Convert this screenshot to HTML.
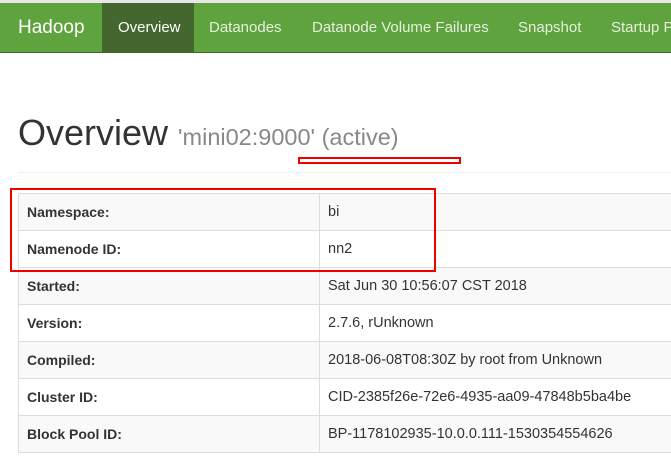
<!DOCTYPE html>
<html><head><meta charset="utf-8"><style>
*{margin:0;padding:0;box-sizing:border-box}
body{width:671px;height:468px;overflow:hidden;background:#fff;font-family:"Liberation Sans",sans-serif;position:relative;color:#333}
.top{position:absolute;left:0;top:0;width:671px;height:3px;background:#e7e7e7}
.nav{position:absolute;left:0;top:3px;width:671px;height:50px;background:#5fa33e;border-bottom:1px solid #3d6b27;overflow:hidden}
.nav span{position:absolute;top:0;line-height:50px;color:#e6f0dd;font-size:15px;white-space:nowrap}
.nav .brand{font-size:19px;color:#fff;left:18px}
.nav .act{left:102px;width:92px;background:#43672f;color:#fff;padding-left:16px}
h1{position:absolute;left:18px;top:112px;font-size:36px;font-weight:normal;color:#333;white-space:nowrap}
h1 small{font-size:23.5px;color:#888}
.hr{position:absolute;left:18px;top:172px;width:653px;height:1px;background:#eee}
.wrap{position:absolute;left:18px;top:193px;width:653px;height:270px;overflow:hidden}
table{width:660px;border-collapse:collapse;font-size:14.5px}
td{border:1px solid #ddd;height:37px;padding:0 8px;white-space:nowrap}
td:first-child{width:301px;font-weight:bold;font-size:14px}
tr:nth-child(odd) td{background:#f9f9f9}
.r{position:absolute;border:2px solid #e00}
</style></head><body>
<div class="top"></div>
<div class="nav">
<span class="brand">Hadoop</span>
<span class="act">Overview</span>
<span style="left:209px">Datanodes</span>
<span style="left:312px">Datanode Volume Failures</span>
<span style="left:518px">Snapshot</span>
<span style="left:611px">Startup Progress</span>
</div>
<h1>Overview <small>'mini02:9000' (active)</small></h1>
<div class="hr"></div>
<div class="wrap"><table>
<tr><td>Namespace:</td><td>bi</td></tr>
<tr><td>Namenode ID:</td><td>nn2</td></tr>
<tr><td>Started:</td><td>Sat Jun 30 10:56:07 CST 2018</td></tr>
<tr><td>Version:</td><td>2.7.6, rUnknown</td></tr>
<tr><td>Compiled:</td><td>2018-06-08T08:30Z by root from Unknown</td></tr>
<tr><td>Cluster ID:</td><td>CID-2385f26e-72e6-4935-aa09-47848b5ba4be</td></tr>
<tr><td>Block Pool ID:</td><td>BP-1178102935-10.0.0.111-1530354554626</td></tr>
</table></div>
<div class="r" style="left:298px;top:157px;width:163px;height:7px"></div>
<div class="r" style="left:10px;top:188px;width:426px;height:84px"></div>
</body></html>
